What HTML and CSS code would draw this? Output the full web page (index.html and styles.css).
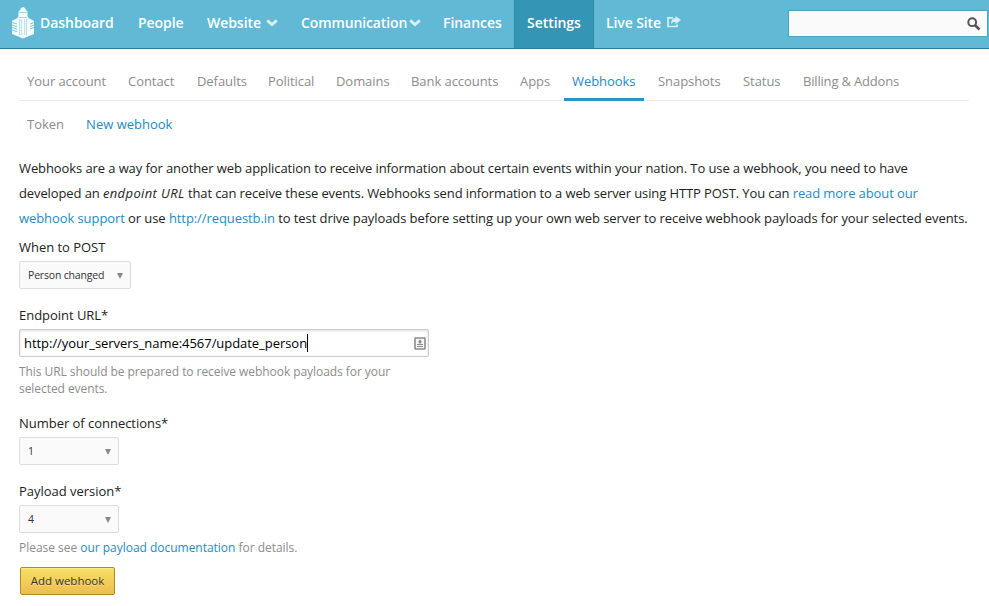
FILE: index.html
```html
<!DOCTYPE html>
<html lang="en">
<head>
<meta charset="utf-8">
<title>Webhooks</title>
<link rel="stylesheet" href="styles.css">
</head>
<body>
<header class="topbar">
  <a class="brand" href="#"><svg width="22" height="32" viewBox="0 0 22 32"><path d="M6.500 9V4.500L8 3l1-2 2-1 2 1 1 2 1.500 1.500V9l1 2 5.500 3v13l-11 4.500L0 27V14l5.500-3z" fill="#fff" opacity=".95"/><path d="M7 5.500h8M7 10.500h8" stroke="#91cde0" stroke-width=".8" fill="none"/><path d="M7.500 12v16M9.300 12v16M12.700 12v16M14.500 12v16" stroke="#a5d7e7" stroke-width=".8" fill="none"/><path d="M0 15.500l5 1.500M0 18l5 1.500M0 20.500l5 1.500M0 23l5 1.500M22 15.500l-4 1.500M22 18l-4 1.500M22 20.500l-4 1.500" stroke="#7cc5dc" stroke-width="1" fill="none"/></svg></a>
  <nav class="mainnav">
    <a class="dash" href="#">Dashboard</a>
    <a class="people" href="#">People</a>
    <a class="website" href="#">Website<svg class="chev" width="12" height="8" viewBox="0 0 12 8"><path d="M1.200 1.300L6 5.500l4.800-4.200" fill="none" stroke="#d8eff8" stroke-width="2.900"/></svg></a>
    <a class="comm" href="#">Communication<svg class="chev" width="12" height="8" viewBox="0 0 12 8"><path d="M1.200 1.300L6 5.500l4.800-4.200" fill="none" stroke="#d8eff8" stroke-width="2.900"/></svg></a>
    <a class="fin" href="#">Finances</a>
    <a class="current" href="#">Settings</a>
    <a class="live" href="#">Live Site<svg class="share" width="14" height="12" viewBox="0 0 14 12"><path d="M6 1.800H1v8.700h9V8.500" fill="none" stroke="#d8eff8" stroke-width="1.700"/><path d="M8.500 0L14 4 8.500 8.200V6C6 6 5 6.500 4 8.200c0-4 1.500-6 4.500-6.200z" fill="#d8eff8"/></svg></a>
  </nav>
  <div class="search"><svg width="15" height="15" viewBox="0 0 15 15"><circle cx="6.200" cy="5.200" r="3.900" fill="none" stroke="#555" stroke-width="2"/><path d="M9 8.300l4.500 4.200" stroke="#555" stroke-width="2.600"/></svg></div>
</header>
<main class="page">
  <nav class="tabs">
    <a class="t1" href="#">Your account</a><a class="t2" href="#">Contact</a><a class="t3" href="#">Defaults</a><a class="t4" href="#">Political</a><a class="t5" href="#">Domains</a><a class="t6" href="#">Bank accounts</a><a class="t7" href="#">Apps</a><a class="t8 on" href="#">Webhooks</a><a class="t9" href="#">Snapshots</a><a class="t10" href="#">Status</a><a class="t11" href="#">Billing &amp; Addons</a>
  </nav>
  <nav class="subtabs"><a href="#">Token</a><a class="on" href="#">New webhook</a></nav>
  <p class="intro"><span class="l1">Webhooks are a way for another web application to receive information about certain events within your nation. To use a webhook, you need to have</span><br><span class="l2">developed an <em>endpoint URL</em> that can receive these events. Webhooks send information to a web server using HTTP POST. You can <a href="#">read more about our</a></span><br><span class="l3"><a href="#">webhook support</a> or use <a href="#">http://requestb.in</a> to test drive payloads before setting up your own web server to receive webhook payloads for your selected events.</span></p>
  <form>
    <div class="field when"><div class="label">When to POST</div><div class="select wide"><span>Person changed</span><i></i></div></div>
    <div class="field url"><div class="label">Endpoint URL*</div><div class="input"><span>http://your_servers_name:4567/update_person</span><b class="caret"></b><svg width="12" height="13" viewBox="0 0 12 13"><rect x="1" y="1" width="10" height="11" rx=".5" fill="#f5f5f5" stroke="#8c8c8c" stroke-width="1.600"/><path d="M6 2.500l1.700 1.700L7 6.500H5L4.300 4.200zM3 7h6v1H3zM3 9h6v1H3z" fill="#8c8c8c"/></svg></div><div class="hint">This URL should be prepared to receive webhook payloads for your<br>selected events.</div></div>
    <div class="field conn"><div class="label">Number of connections*</div><div class="select"><span>1</span><i></i></div></div>
    <div class="field payload"><div class="label">Payload version*</div><div class="select"><span>4</span><i></i></div><div class="hint">Please see <a href="#">our payload documentation</a> for details.</div></div>
    <button type="button">Add webhook</button>
  </form>
</main>
</body>
</html>
```
FILE: styles.css
```css
* { box-sizing: border-box; }
body { margin: 0; background: #fff; color: #222; font: 13px/25px "Open Sans", sans-serif; overflow: hidden; }
a { color: #1d8cc2; text-decoration: none; }
.topbar { display: flex; height: 49px; background: #61b9d5; border-bottom: 1px solid #2c7f99; }
.brand { width: 28px; padding: 7px 0 0 12px; flex: none; }
.brand svg { display: block; }
.mainnav { display: flex; font-size: 14px; font-weight: 600; line-height: 46px; white-space: nowrap; }
.mainnav a { color: #fff; padding-left: 12px; height: 48px; flex: none; letter-spacing: -.05px; }
.mainnav .dash { width: 98px; }
.mainnav .people { width: 69px; }
.mainnav .website { width: 94px; }
.mainnav .comm { width: 142px; letter-spacing: -.12px; }
.mainnav .fin { width: 83px; }
.mainnav .current { width: 80px; background: #3595b4; border: solid #2f87a4; border-width: 0 1px; }
.mainnav .live { width: 100px; letter-spacing: -.1px; }
.chev { margin: 0 0 1px 5px; }
.comm .chev { margin-left: 2px; }
.share { margin: 0 0 0 6px; }
.search { display: flex; justify-content: flex-end; width: 200px; height: 27px; margin: 10px 1px 0 auto; padding: 6px 6px 0 0; background: #fafafa; border: 1px solid #4ba4c1; }
.page { padding: 0 0 0 19px; }
.tabs { display: flex; gap: 6px; width: 950px; height: 52px; padding-top: 14px; border-bottom: 1px solid #eaeaea; line-height: 36px; white-space: nowrap; letter-spacing: -.06px; }
.tabs a, .subtabs a { color: #8c8c8c; padding: 0 8px; flex: none; }
.t1 { width: 95px; }
.t2 { width: 63px; }
.t3 { width: 65px; }
.t4 { width: 62px; }
.t5 { width: 69px; }
.t6 { width: 103px; }
.t7 { width: 46px; }
.t8 { width: 80px; }
.t9 { width: 79px; }
.t10 { width: 54px; }
.t11 { width: 112px; letter-spacing: -.18px; }
.tabs a.on { height: 38px; border-bottom: 3px solid #2496cb; }
.tabs .on, .subtabs .on { color: #1d8cc2; }
.subtabs { display: flex; gap: 6px; height: 55px; padding-top: 11px; }
.intro { margin: 0; height: 75px; white-space: nowrap; }
.l1 { letter-spacing: -.097px; }
.l2 { letter-spacing: -.11px; }
.l2 em { letter-spacing: .38px; }
.l3 { letter-spacing: -.08px; }
.field { display: flex; flex-direction: column; }
.label { height: 30px; line-height: 32px; letter-spacing: -.03px; }
.when, .conn { height: 68px; }
.url { height: 108px; }
.payload { height: 92px; }
form { padding-top: 1px; margin-top: -1px; }
.select { display: flex; align-items: center; justify-content: space-between; width: 100px; height: 28px; padding: 0 6px 0 8px; background: #fafafa; border: 1px solid #ddd; border-radius: 2px; font-size: 10.5px; line-height: 24px; color: #333; }
.select span { margin-top: -1px; letter-spacing: -.18px; }
.wide { width: 112px; }
.select i { border: solid transparent; border-width: 6px 3.500px 0; border-top-color: #888; margin: 2px 1px 0 0; }
.input { display: flex; align-items: center; width: 410px; height: 28px; padding: 0 2px 0 4px; border: 1px solid #ccc; border-radius: 2px; box-shadow: inset 0 1px 3px #ddd; color: #000; letter-spacing: -.045px; }
.caret { width: 1px; height: 18px; background: #000; }
.input svg { margin-left: auto; }
.hint { font-size: 12px; line-height: 17px; padding-top: 6px; color: #8c8c8c; letter-spacing: -.06px; }
.payload .hint { letter-spacing: -.025px; }
button { display: block; width: 95px; height: 28px; margin: 0 0 0 1px; padding: 0 0 2px; border: 1px solid #b18b22; border-radius: 2px; background: linear-gradient(#f8df65, #ecbd4f); color: #333; font: 11.5px "Open Sans", sans-serif; box-shadow: inset 0 1px #fbe98c; text-shadow: 0 1px #fae17f; }
```
